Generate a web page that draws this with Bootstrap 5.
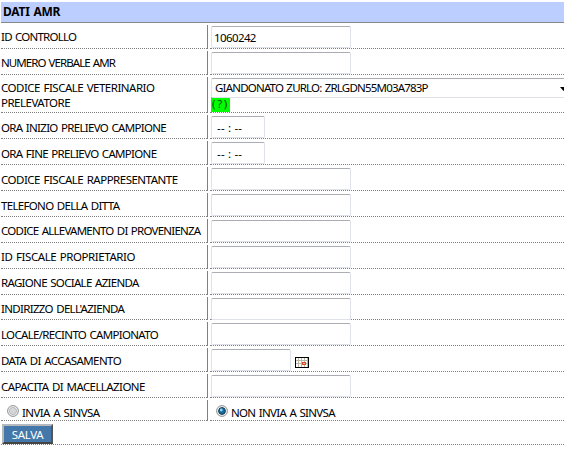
<!DOCTYPE html>
<html lang="it">
<head>
<meta charset="utf-8">
<title>Dati AMR</title>
<link rel="stylesheet" href="https://cdn.jsdelivr.net/npm/bootstrap@5.3.0/dist/css/bootstrap.min.css">
<style>
body{font:11.5px/15px "Noto Sans",sans-serif;color:#000;background:#fff;letter-spacing:-.58px;word-spacing:1px;overflow:hidden;height:460px}
form{padding-left:1px}
.amr-head{height:21px;margin-top:2px;background:#bccdff;border-bottom:1px solid #888;font-size:12px;font-weight:700;line-height:20px;padding-left:2px;letter-spacing:-.25px}
.amr-row{height:26px;column-gap:3px}
.amr-label,.amr-value{border-bottom:1px dotted #808080}
.amr-label{width:206px;padding-top:7px;white-space:nowrap;position:relative}
.amr-label.up{padding-top:6px}
.amr-label::after{content:"";position:absolute;right:-1px;top:2px;bottom:-1px;width:1px;background:#808080}
.amr-value{padding:3px 0 0 1px;min-width:0}
.amr-box{width:140px;height:22px;border:1px solid #dfe2ea;border-top-color:#abadb3;border-radius:2px;background:#fff;padding:0 2px;font-size:11.5px;line-height:20px;letter-spacing:-.6px;color:#000;outline:0;display:block}
.amr-box.time{width:54px;padding-left:5px;letter-spacing:.2px}
.amr-box.date{width:80px}
.amr-pick{height:20px;width:372px;line-height:18px;border:1px solid #dfe2ea;border-top-color:#abadb3;border-radius:2px;padding-left:3px;letter-spacing:-.8px;white-space:nowrap}
.amr-pick svg{position:absolute;left:348px;top:8px}
.amr-help{width:19px;height:15px;background:#0f0;color:#064806;line-height:14px;letter-spacing:1.7px;padding-left:1px;margin-top:-1px}
.tall{height:38px}.tall .amr-label{padding-top:5px}
.short{height:25px}.choice{height:23px}
.choice svg{margin:0 3px 0 -2px;flex:none}
.choice .amr-value{padding:7px 0 0 8px}
.foot{height:24px;border-bottom:1px dotted #808080;padding:3px 0 0 1px}
.amr-save{width:51px;height:20px;background:#4477aa;color:#fff;border:2px solid;border-color:#b5b9bd #555 #444 #b5b9bd;border-radius:0;padding:0;font-size:11.5px;line-height:17px;letter-spacing:-.3px}
.t1{letter-spacing:-.68px}.t2{letter-spacing:-.76px}.t3{letter-spacing:-.93px}
.w1{letter-spacing:-.5px}.w2{letter-spacing:-.43px}
</style>
<script src="https://cdn.jsdelivr.net/npm/bootstrap@5.3.0/dist/js/bootstrap.bundle.min.js"></script>
</head>
<body>
<form class="m-0">
<div class="amr-head">DATI AMR</div>
<div class="amr-row d-flex"><div class="amr-label flex-shrink-0 up"><span class="t2">ID CONTROLLO</span></div><div class="amr-value flex-fill"><input class="amr-box" value="1060242"></div></div>
<div class="amr-row d-flex"><div class="amr-label flex-shrink-0 up"><span class="t3">NUMERO VERBALE AMR</span></div><div class="amr-value flex-fill"><input class="amr-box"></div></div>
<div class="amr-row d-flex tall"><div class="amr-label flex-shrink-0"><span class="w1">CODICE FISCALE VETERINARIO</span><br><span class="w1">PRELEVATORE</span></div><div class="amr-value flex-fill"><div class="amr-pick position-relative"><span>GIANDONATO ZURLO: ZRLGDN55M03A783P</span><svg width="7" height="4"><path d="M0 0h7L3.5 4z"/></svg></div><div class="amr-help">(?)</div></div></div>
<div class="amr-row d-flex"><div class="amr-label flex-shrink-0"><span class="t1">ORA INIZIO PRELIEVO CAMPIONE</span></div><div class="amr-value flex-fill"><input class="amr-box time" value="-- : --"></div></div>
<div class="amr-row d-flex"><div class="amr-label flex-shrink-0"><span class="t1">ORA FINE PRELIEVO CAMPIONE</span></div><div class="amr-value flex-fill"><input class="amr-box time" value="-- : --"></div></div>
<div class="amr-row d-flex"><div class="amr-label flex-shrink-0"><span class="w1">CODICE FISCALE RAPPRESENTANTE</span></div><div class="amr-value flex-fill"><input class="amr-box"></div></div>
<div class="amr-row d-flex"><div class="amr-label flex-shrink-0"><span class="t1">TELEFONO DELLA DITTA</span></div><div class="amr-value flex-fill"><input class="amr-box"></div></div>
<div class="amr-row d-flex"><div class="amr-label flex-shrink-0 up"><span class="t2">CODICE ALLEVAMENTO DI PROVENIENZA</span></div><div class="amr-value flex-fill"><input class="amr-box"></div></div>
<div class="amr-row d-flex"><div class="amr-label flex-shrink-0 up"><span class="w2">ID FISCALE PROPRIETARIO</span></div><div class="amr-value flex-fill"><input class="amr-box"></div></div>
<div class="amr-row d-flex"><div class="amr-label flex-shrink-0 up"><span class="t1">RAGIONE SOCIALE AZIENDA</span></div><div class="amr-value flex-fill"><input class="amr-box"></div></div>
<div class="amr-row d-flex short"><div class="amr-label flex-shrink-0 up"><span class="t1">INDIRIZZO DELL'AZIENDA</span></div><div class="amr-value flex-fill"><input class="amr-box"></div></div>
<div class="amr-row d-flex"><div class="amr-label flex-shrink-0"><span class="t1">LOCALE/RECINTO CAMPIONATO</span></div><div class="amr-value flex-fill"><input class="amr-box"></div></div>
<div class="amr-row d-flex"><div class="amr-label flex-shrink-0"><span>DATA DI ACCASAMENTO</span></div><div class="amr-value flex-fill d-flex"><input class="amr-box date"><svg class="ms-1 mt-2" width="14" height="11" shape-rendering="crispEdges"><path d="M0 0h14v11H0z"/><path fill="#fff" d="M1 1h12v9H1z"/><path stroke="#b8b8a8" fill="none" d="M1 3.5h12M1 6.5h12M3.5 1v9M6.5 1v9M9.5 1v9M12.5 1v9"/><path fill="#dc4b2c" d="M7 5h4v3H7z"/><path fill="#ffb080" d="M8 6h2v1H8z"/></svg></div></div>
<div class="amr-row d-flex"><div class="amr-label flex-shrink-0"><span>CAPACITA DI MACELLAZIONE</span></div><div class="amr-value flex-fill"><input class="amr-box"></div></div>
<div class="amr-row d-flex choice"><div class="amr-label flex-shrink-0 d-flex ps-2"><svg width="12" height="12" viewBox="0 0 12 12"><circle cx="6" cy="6" r="5.4" fill="#f4f4f4" stroke="#8e8f8f"/><circle cx="6" cy="6" r="3.6" fill="#d4d6d9" stroke="#b8bcc0"/></svg><span>INVIA A SINVSA</span></div><div class="amr-value flex-fill d-flex"><svg width="12" height="12" viewBox="0 0 12 12"><circle cx="6" cy="6" r="5.4" fill="#f4f4f4" stroke="#8e8f8f"/><circle cx="6" cy="6" r="3.4" fill="#16699b" stroke="#173a58"/><circle cx="5.3" cy="5" r="1.4" fill="#8bd7f5"/></svg><span class="t1">NON INVIA A SINVSA</span></div></div>
<div class="foot"><button type="button" class="amr-save btn d-block">SALVA</button></div>
</form>
</body>
</html>
